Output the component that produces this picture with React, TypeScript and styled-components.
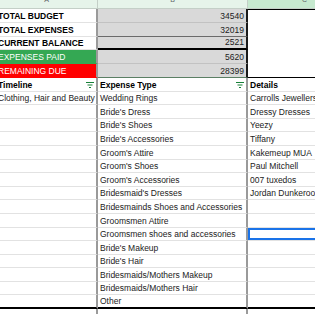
import React from "react";
import styled, { createGlobalStyle } from "styled-components";

const GlobalStyle = createGlobalStyle`
  html, body {
    margin: 0;
    padding: 0;
    background: #fff;
    overflow: hidden;
  }
  body {
    font-family: "Liberation Sans", Arial, sans-serif;
  }
`;

const COLS = "102px 150px 114px";

const Sheet = styled.div`
  width: 366px;
  margin-left: -4px;
`;

const Strip = styled.div`
  display: grid;
  grid-template-columns: ${COLS};
  height: 9px;
`;

const Letter = styled.div<{ $active?: boolean }>`
  box-sizing: border-box;
  background: ${(p) => (p.$active ? "#c6e9cf" : "#e6f4ea")};
  border-bottom: 1px solid #c4cfc7;
  border-right: 1px solid #c4cfc7;
  color: #5f6368;
  font-size: 7px;
  line-height: 7px;
  text-align: center;
  overflow: hidden;

  span {
    display: block;
    margin-top: -4px;
  }
`;

const Row = styled.div<{ $h: number }>`
  display: grid;
  grid-template-columns: ${COLS};
  height: ${(p) => p.$h}px;
`;

const Cell = styled.div<{
  $bg?: string;
  $ink?: string;
  $bold?: boolean;
  $num?: boolean;
  $under?: string;
  $edge?: string;
  $top?: string;
  $picked?: boolean;
}>`
  box-sizing: border-box;
  display: flex;
  align-items: flex-end;
  justify-content: ${(p) => (p.$num ? "flex-end" : "flex-start")};
  min-width: 0;
  padding: 0 2px 1px 2px;
  background: ${(p) => p.$bg ?? "#fff"};
  color: ${(p) => p.$ink ?? "#222"};
  font-weight: ${(p) => (p.$bold ? 700 : 400)};
  font-size: 8.5px;
  line-height: 9px;
  white-space: nowrap;
  overflow: hidden;
  border-top: ${(p) => p.$top ?? "none"};
  border-bottom: ${(p) => p.$under ?? "1px solid #e2e2e2"};
  border-right: ${(p) => p.$edge ?? "none"};
  box-shadow: ${(p) => (p.$picked ? "inset 0 0 0 2px #1a73e8" : "none")};
`;

const FilterIcon = styled.svg`
  flex: none;
  margin-left: auto;
  margin-bottom: 2px;
`;

const Filler = styled.div`
  display: grid;
  grid-template-columns: ${COLS};
  height: 12px;
`;

const Gap = styled.div<{ $edge?: boolean }>`
  border-right: ${(p) => (p.$edge ? "2px solid #9a9a9a" : "none")};
`;

const GRAY = "2px solid #9a9a9a";
const TOP_H = 13.8;
const BODY_H = 13.6;

const Filter = () => (
  <FilterIcon width="8" height="6" viewBox="0 0 8 6">
    <rect x="0" y="0" width="8" height="1" fill="#188038" />
    <rect x="1.5" y="2.5" width="5" height="1" fill="#188038" />
    <rect x="3" y="5" width="2" height="1" fill="#188038" />
  </FilterIcon>
);

const summary = [
  { label: "TOTAL BUDGET", value: "34540", under: "1px solid #c2c2c2" },
  { label: "TOTAL EXPENSES", value: "32019", under: "1px solid #6b6b6b" },
  { label: "CURRENT BALANCE", value: "2521", under: "2px solid #000" },
  { label: "EXPENSES PAID", value: "5620", under: "1px solid #c2c2c2", bg: "#34a853" },
  { label: "REMAINING DUE", value: "28399", under: "1px solid #5b7f64", bg: "#ff0000" },
];

const expenses = [
  "Wedding Rings",
  "Bride's Dress",
  "Bride's Shoes",
  "Bride's Accessories",
  "Groom's Attire",
  "Groom's Shoes",
  "Groom's Accessories",
  "Bridesmaid's Dresses",
  "Bridesmainds Shoes and Accessories",
  "Groomsmen Attire",
  "Groomsmen shoes and accessories",
  "Bride's Makeup",
  "Bride's Hair",
  "Bridesmaids/Mothers Makeup",
  "Bridesmaids/Mothers Hair",
  "Other",
];

const details = [
  "Carrolls Jewellers",
  "Dressy Dresses",
  "Yeezy",
  "Tiffany",
  "Kakemeup MUA",
  "Paul Mitchell",
  "007 tuxedos",
  "Jordan Dunkeroo",
];

const App = () => {
  return (
    <>
      <GlobalStyle />
      <Sheet>
        <Strip>
          <Letter>
            <span>A</span>
          </Letter>
          <Letter>
            <span>B</span>
          </Letter>
          <Letter $active>
            <span>C</span>
          </Letter>
        </Strip>

        {summary.map((s, i) => (
          <Row $h={TOP_H} key={s.label}>
            <Cell
              $bold={!s.bg}
              $bg={s.bg}
              $ink={s.bg ? "#fff" : "#000"}
              $under={s.bg ? "1px solid transparent" : undefined}
              $edge={GRAY}
            >
              {s.label}
            </Cell>
            <Cell $num $bg="#d9d9d9" $under={s.under} $edge="2px solid #1a1a1a">
              {s.value}
            </Cell>
            <Cell
              $top={i === 0 ? "1px solid #000" : undefined}
              $under={i === summary.length - 1 ? "1px solid #000" : "none"}
            />
          </Row>
        ))}

        <Row $h={BODY_H}>
          <Cell $bold $ink="#000" $edge={GRAY}>
            Timeline
            <Filter />
          </Cell>
          <Cell $bold $ink="#000" $edge={GRAY}>
            Expense Type
            <Filter />
          </Cell>
          <Cell $bold $ink="#000">
            Details
          </Cell>
        </Row>

        {expenses.map((e, i) => {
          const last = i === expenses.length - 1;
          const under = last ? "2px solid #000" : undefined;
          return (
            <Row $h={BODY_H} key={e}>
              <Cell $edge={GRAY} $under={under}>
                {i === 0 ? "Clothing, Hair and Beauty" : ""}
              </Cell>
              <Cell $edge={GRAY} $under={under}>
                {e}
              </Cell>
              <Cell $under={under} $picked={i === 10}>
                {details[i] ?? ""}
              </Cell>
            </Row>
          );
        })}

        <Filler>
          <Gap $edge />
          <Gap $edge />
          <Gap />
        </Filler>
      </Sheet>
    </>
  );
};

export default App;
